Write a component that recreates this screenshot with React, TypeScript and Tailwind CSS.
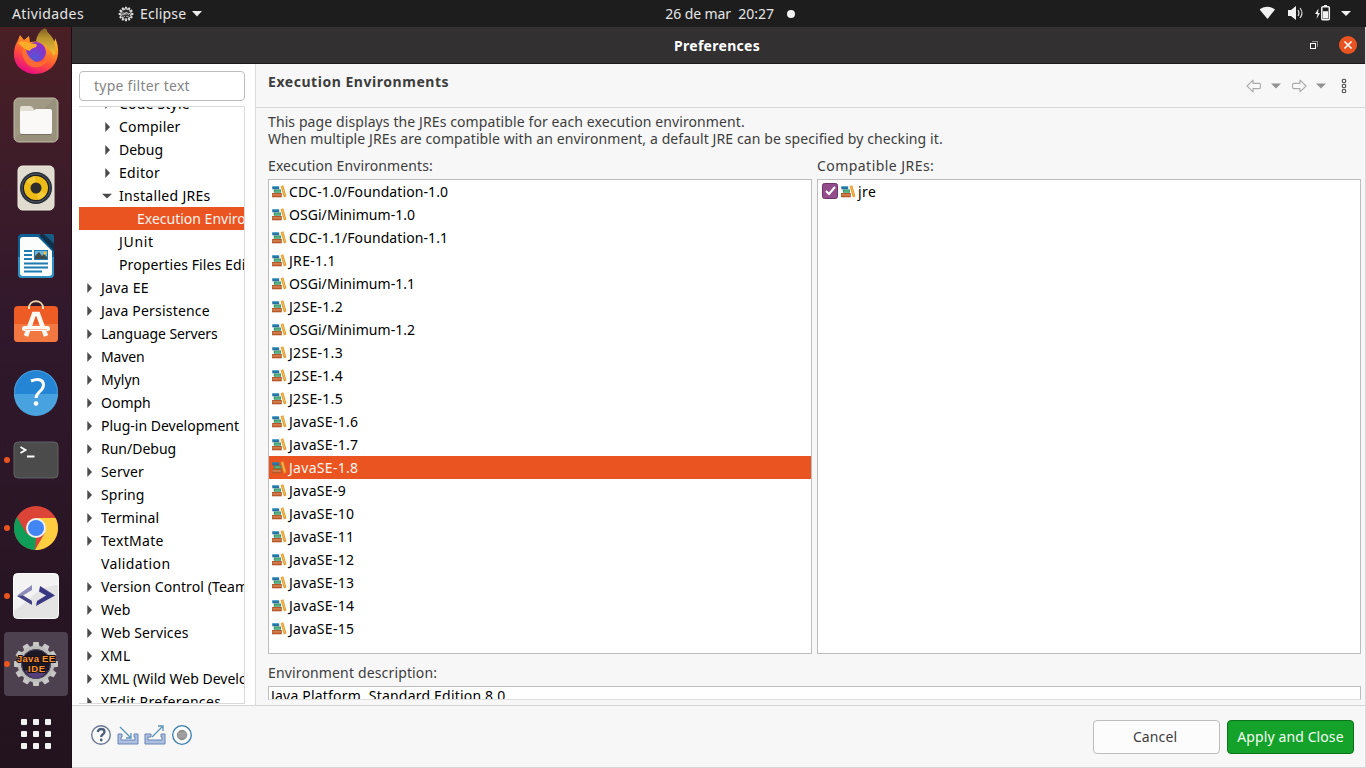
import type { ReactNode } from "react";

type TreeItem = { label: string; level: number; arrow?: "right" | "down"; selected?: boolean; spacing?: string };

const tree: TreeItem[] = [
  { label: "Code Style", level: 1, arrow: "right", spacing: "tracking-[0.2px]" },
  { label: "Compiler", level: 1, arrow: "right", spacing: "tracking-[0.2px]" },
  { label: "Debug", level: 1, arrow: "right" },
  { label: "Editor", level: 1, arrow: "right", spacing: "tracking-[0.3px]" },
  { label: "Installed JREs", level: 1, arrow: "down", spacing: "tracking-[0.3px]" },
  { label: "Execution Environments", level: 2, selected: true },
  { label: "JUnit", level: 1, spacing: "tracking-[0.7px]" },
  { label: "Properties Files Editor", level: 1, spacing: "tracking-[0.1px]" },
  { label: "Java EE", level: 0, arrow: "right", spacing: "tracking-[0.3px]" },
  { label: "Java Persistence", level: 0, arrow: "right", spacing: "tracking-[0.2px]" },
  { label: "Language Servers", level: 0, arrow: "right", spacing: "tracking-[-0.08px]" },
  { label: "Maven", level: 0, arrow: "right", spacing: "tracking-[-0.15px]" },
  { label: "Mylyn", level: 0, arrow: "right" },
  { label: "Oomph", level: 0, arrow: "right" },
  { label: "Plug-in Development", level: 0, arrow: "right" },
  { label: "Run/Debug", level: 0, arrow: "right" },
  { label: "Server", level: 0, arrow: "right", spacing: "tracking-[0.15px]" },
  { label: "Spring", level: 0, arrow: "right", spacing: "tracking-[0.1px]" },
  { label: "Terminal", level: 0, arrow: "right", spacing: "tracking-[0.1px]" },
  { label: "TextMate", level: 0, arrow: "right", spacing: "tracking-[0.3px]" },
  { label: "Validation", level: 0, spacing: "tracking-[0.4px]" },
  { label: "Version Control (Team)", level: 0, arrow: "right", spacing: "tracking-[0.1px]" },
  { label: "Web", level: 0, arrow: "right" },
  { label: "Web Services", level: 0, arrow: "right", spacing: "tracking-[0.1px]" },
  { label: "XML", level: 0, arrow: "right", spacing: "tracking-[0.5px]" },
  { label: "XML (Wild Web Developer)", level: 0, arrow: "right" },
  { label: "YEdit Preferences", level: 0, arrow: "right", spacing: "tracking-[0.33px]" },
];

const environments = [
  "CDC-1.0/Foundation-1.0", "OSGi/Minimum-1.0", "CDC-1.1/Foundation-1.1", "JRE-1.1", "OSGi/Minimum-1.1",
  "J2SE-1.2", "OSGi/Minimum-1.2", "J2SE-1.3", "J2SE-1.4", "J2SE-1.5", "JavaSE-1.6", "JavaSE-1.7", "JavaSE-1.8",
  "JavaSE-9", "JavaSE-10", "JavaSE-11", "JavaSE-12", "JavaSE-13", "JavaSE-14", "JavaSE-15",
];

function environmentSpacing(name: string) {
  if (name.startsWith("J")) return "tracking-[0.3px]";
  return name.startsWith("CDC") ? "tracking-[0.1px]" : "tracking-[0.05px]";
}

const indent = ["pl-[8px]", "pl-[26px]", "pl-[44px]"];

function TreeArrow({ kind }: { kind?: "right" | "down" }) {
  return (
    <svg width="14" height="12" viewBox="0 0 14 12" className="shrink-0 overflow-visible" fill="#4a4a4a">
      {kind === "right" && <path d="M0.3 1v10l4.7-5z" />}
      {kind === "down" && <path d="M-3 3.8h10l-5 4.8z" />}
    </svg>
  );
}

function Books() {
  return (
    <svg width="16" height="14" viewBox="0 0 16 14" className="shrink-0">
      <path d="M1.3 1.5h6.9v2.8H1.3z" fill="#2a6ba6" />
      <path d="M1.3 1.5h6.4v1H1.3z" fill="#1b93b4" />
      <path d="M2.8 4.5h7.2v3.2H2.8z" fill="#2c9062" />
      <path d="M3.8 5.6h5.6v1H3.8z" fill="#7cc79b" />
      <path d="M1 8h9.8v4.3H1z" fill="#b5592b" />
      <path d="M1.5 9.3h8.4v1.3H1.5z" fill="#dc8b59" />
      <path d="M9.6 1.2l2.7-.9 3.1 11-2.5 1.2z" fill="#e59a25" />
      <path d="M10.7 1.5l.9-.3 2.6 9-.9.4z" fill="#f6c066" />
    </svg>
  );
}

function DockItem({ children, running, active, first }: { children: ReactNode; running?: boolean; active?: boolean; first?: boolean }) {
  return (
    <div className={`relative flex w-[72px] shrink-0 justify-center ${first ? "h-[59px] items-end pb-[10px]" : "h-[68px] items-center"}`}>
      {active && <div className="absolute inset-x-1 inset-y-0.5 rounded-[4px] bg-[#4e414f]" />}
      {running && <div className="absolute top-[31px] left-[4px] size-[6px] rounded-full bg-[#e95420]" />}
      <svg width="48" height="48" viewBox="0 0 48 48" className="relative">{children}</svg>
    </div>
  );
}

const teeth = Array.from({ length: 12 }, (_, i) => i * 30);

function Gear({ color }: { color: string }) {
  return (
    <g fill={color}>
      {teeth.map((a) => (
        <path key={a} d="M20.3 8.5l1-6.5h5.4l1 6.5z" transform={`rotate(${a} 24 24)`} />
      ))}
    </g>
  );
}

function Dock() {
  return (
    <div className="flex w-[72px] shrink-0 flex-col overflow-hidden border-r border-[#1c0d19] bg-linear-to-b from-[#491f25] via-[#31182c] via-40% to-[#22131e]">
      <DockItem first>
        <defs>
          <linearGradient id="ff" x1=".85" y1="0" x2=".35" y2="1">
            <stop offset="0" stopColor="#ffdc3a" />
            <stop offset=".4" stopColor="#ff9322" />
            <stop offset=".7" stopColor="#ff4a3d" />
            <stop offset="1" stopColor="#e80c85" />
          </linearGradient>
          <linearGradient id="fftop" x1="0" y1="0" x2="0" y2="1">
            <stop offset="0" stopColor="#7a5d26" />
            <stop offset=".35" stopColor="#b8922e" />
            <stop offset="1" stopColor="#f7c337" />
          </linearGradient>
          <radialGradient id="ffglobe" cx=".45" cy=".75">
            <stop offset="0" stopColor="#5158d8" />
            <stop offset="1" stopColor="#8a33c8" />
          </radialGradient>
        </defs>
        <path d="M3.500 17L6 12l2-5 4 5 5-4 1 6 12-1c-1-6 0-10 4-12 1 5 6 6 8 13 1-1 1-3 1-4 5 10 4 21-2 28-8 9-21 10-29 5C2 38 0 27 3.500 17z" fill="url(#ff)" />
        <path d="M24 13c1-6 4-11 9-13 2 5 7 7 9 13 2 6 2 11 0 15-3-6-8-12-18-15z" fill="url(#fftop)" />
        <circle cx="24" cy="24" r="10" fill="url(#ffglobe)" />
        <path d="M13 17c1 9 5 14 11 17 6 1 10-1 12-5-1 7-8 12-16 10-6-2-10-9-10-17z" fill="#ff7a2c" opacity=".75" />
        <path d="M6 15c2-2 6-2 11 0l7 1c1 0 1 2 0 3-2 1-5 1-6 4-4-1-8-4-12-8z" fill="#ffad28" />
      </DockItem>
      <DockItem>
        <rect x="2" y="2" width="44" height="44" rx="5" fill="#a09984" stroke="#bfb9a6" />
        <path d="M3 42L42 3h2v42H4z" fill="#8e8772" opacity=".45" />
        <path d="M8 12q0-2 2-2h8q2 0 3 2l2 3v6H8z" fill="#e2dfd2" />
        <path d="M8 17q0-2 2-2h11l3-2h14q2 0 2 2v21q0 2-2 2H10q-2 0-2-2z" fill="#fbf9f7" />
        <path d="M9 38.5h30" stroke="#777160" />
      </DockItem>
      <DockItem>
        <rect x="6" y="2" width="36" height="44" rx="4.5" fill="#e0dcd0" stroke="#eeeae0" />
        <circle cx="24" cy="24" r="16" fill="#2b303b" />
        <circle cx="24" cy="24" r="14" fill="#1e2027" stroke="#555b66" strokeWidth="1" />
        <circle cx="24" cy="24" r="12" fill="#edbc16" />
        <path d="M24 24L14 17a12 12 0 0 1 9-5zM24 24l10 6a12 12 0 0 1-8 6z" fill="#f8d64c" opacity=".6" />
        <circle cx="24" cy="24" r="5.5" fill="#2d2d2d" />
      </DockItem>
      <DockItem>
        <path d="M10 2h18l14 14v26q0 4-4 4H10q-4 0-4-4V6q0-4 4-4z" fill="#0d5f94" />
        <path d="M6 25h36v17q0 4-4 4H10q-4 0-4-4z" fill="#2d91c4" />
        <path d="M11 5h15l14 14v22q0 3-3 3H11q-3 0-3-3V8q0-3 3-3z" fill="#fbfcfc" />
        <path d="M31 2h9q2 0 2 2v8z" fill="#185b87" />
        <path d="M27 3l15 16v-7L33 3z" fill="#102f48" />
        <path d="M12 19h8M12 23h8M12 27h8M12 31.500h24M12 35.500h24M12 39.500h18" stroke="#1c7cb2" strokeWidth="2" />
        <path d="M22 18h14v10H22z" fill="#1c7cb2" />
        <path d="M23 19h12v8H23z" fill="#70b4d5" />
        <path d="M23 27v-3l4-4 3 4 2-2 3 3v2z" fill="#414b49" />
        <circle cx="33" cy="21" r="1.500" fill="#f6c22d" />
      </DockItem>
      <DockItem>
        <path d="M17 8c0-9 14-9 14 0" fill="none" stroke="#ead2a8" strokeWidth="2" />
        <rect x="2" y="6" width="44" height="36" rx="4" fill="#ee5c25" />
        <path d="M2 24h44v14q0 4-4 4H6q-4 0-4-4z" fill="#f17841" />
        <path d="M17 9V6M31 9V6" stroke="#f7ddb5" strokeWidth="2" />
        <path d="M14 36l8-22h4l8 22" fill="none" stroke="#fff8f3" strokeWidth="4.6" />
        <rect x="10" y="26" width="28" height="5" rx="2.5" fill="#fff8f3" />
        <path d="M13 29.500h22" stroke="#f3bba5" />
      </DockItem>
      <DockItem>
        <circle cx="24" cy="24" r="22" fill="#2485d4" />
        <path d="M2 26a22 22 0 0 0 44 0z" fill="#48a2df" />
        <circle cx="24" cy="24" r="21.5" fill="none" stroke="#56a5dc" strokeWidth=".8" />
        <path d="M19 13c8-3 12.500-1 12.500 4 0 6-7.500 7-7.500 13" fill="none" stroke="#fff" strokeWidth="3" />
        <circle cx="24" cy="35.5" r="2.3" fill="#fff" />
      </DockItem>
      <DockItem running>
        <rect x="2" y="6" width="44" height="36" rx="4" fill="#4b4b4b" stroke="#636363" />
        <path d="M8.5 11l5 3-5 3M15 20.5h7.5" stroke="#fff" strokeWidth="1.8" fill="none" />
      </DockItem>
      <DockItem running>
        <circle cx="24" cy="24" r="22" fill="#db4437" />
        <path d="M4.9 13L14.5 29.5 24 34l-1 12A22 22 0 0 1 4.9 13z" fill="#0f9d58" />
        <path d="M24 14h19.600A22 22 0 0 1 23 46l9.500-16.500z" fill="#ffcd40" />
        <circle cx="24" cy="24" r="10" fill="#f1f1f1" />
        <circle cx="24" cy="24" r="8" fill="#4285f4" />
      </DockItem>
      <DockItem running>
        <rect x="1.5" y="1.5" width="45" height="45" rx="4" fill="#f3f3f3" stroke="#fff" />
        <path d="M2 38C17 32 21 15 46 13v29q0 4-4 4H6q-4 0-4-4z" fill="#e4e4e4" />
        <path d="M20 13v5l-9 5.500 8 5-1 1L5 23.500z" fill="#8d8cbb" />
        <path d="M11 23.500l9 5.500v4L5 24z" fill="#454385" />
        <path d="M28 14l15 9.500L24 34l1-5 9-5.500-7-4z" fill="#393782" />
      </DockItem>
      <DockItem running active>
        <Gear color="#c8c8c6" />
        <circle cx="24" cy="24" r="16.500" fill="#211b2c" stroke="#bdbdbb" strokeWidth="3.5" />
        <circle cx="24" cy="24" r="14.5" fill="#1d1826" stroke="#56506a" />
        <path d="M13 31q11-7 22 0-4 7-11 7t-11-7z" fill="#56407c" />
        <g fontFamily="Liberation Sans, sans-serif" fontSize="9.500" fontWeight="bold" textAnchor="middle" fill="#f79332" stroke="#1d1010" strokeWidth="2" paintOrder="stroke">
          <text x="24" y="21.5" textLength="38">Java EE</text>
          <text x="24.500" y="31.500" textLength="17">IDE</text>
        </g>
      </DockItem>
      <div className="flex flex-1 items-start justify-center pt-[21px]">
        <div className="grid grid-cols-3 gap-[6px]">
          {Array.from({ length: 9 }, (_, i) => (
            <div key={i} className="size-[6px] rounded-[1px] bg-[#f2f2f2]" />
          ))}
        </div>
      </div>
    </div>
  );
}

function TopBar() {
  return (
    <div className="grid h-[27px] shrink-0 grid-cols-3 items-center bg-[#1d1d1d] text-[14px] text-[#e6e6e6]">
      <div className="flex items-center pl-[12px]">
        <span className="w-[106px] tracking-[0.4px]">Atividades</span>
        <svg width="16" height="16" viewBox="0 0 48 48">
          <Gear color="#dedede" />
          <circle cx="24" cy="24" r="15" fill="#292929" stroke="#d0d0d0" strokeWidth="4" strokeDasharray="7 3" />
          <path d="M11 21h8v5h-7M22 26v-6h5v6M29 20l3 6 4-6M17 31h4M25 31h7" stroke="#dedede" strokeWidth="2.5" fill="none" />
        </svg>
        <span className="ml-[6px] w-[47px] tracking-[0.2px]">Eclipse</span>
        <svg width="10" height="6" viewBox="0 0 10 6" className="ml-[5px]" fill="#eee"><path d="M0 0h10L5 5.5z" /></svg>
      </div>
      <div className="flex items-center pl-[210px] whitespace-nowrap">
        <span className="w-[73px] tracking-[-0.1px]">26 de mar</span>
        <span className="tracking-[-0.05px]">20:27</span>
        <span className="ml-[13px] size-[8px] rounded-full bg-[#f2f2f2]" />
      </div>
      <svg width="96" height="20" viewBox="0 0 96 20" className="mr-[10px] -mt-px justify-self-end" fill="#f2f2f2">
        <path d="M-.5 6.400Q7.500 1 15 6.400L7.500 16z" />
        <path d="M28 7h3l5-4v14l-5-4h-3z" />
        <path d="M38 7q2 3 0 6M40 5q4 5 0 10" fill="none" stroke="#d8d8d8" strokeWidth="1.2" />
        <path d="M58.500 5.500L55 11h2.500l-1 5 3.500-6h-2z" />
        <path d="M64 2h3v2h-3z" />
        <rect x="61.8" y="3.8" width="7.5" height="13" rx="1" fill="none" stroke="#f2f2f2" strokeWidth="1.5" />
        <path d="M63 8.200h5v7.300h-5z" />
        <path d="M81 8h10l-5 5z" />
      </svg>
    </div>
  );
}

function NavArrow({ flip }: { flip?: boolean }) {
  return (
    <svg width="16" height="14" viewBox="0 0 16 14" className={flip ? "-scale-x-100" : ""}>
      <path d="M1 7l6-5.800v3.200h6.200q1.200 0 1.200 1v3.200q0 1-1.200 1H7v3.200z" fill="#f9f9f9" stroke="#aaa" strokeWidth="1.1" strokeLinejoin="round" />
    </svg>
  );
}

function Sidebar() {
  return (
    <div className="flex w-[184px] shrink-0 flex-col border-r border-[#dcdcdc] bg-white pt-[7px] pl-[7px]">
      <div className="flex h-[30px] w-[166px] shrink-0 items-center rounded-[4px] border border-[#bdbdbd] bg-white pb-[2px] pl-[14px] text-[14px] tracking-[0.25px] text-[#858585]">
        type filter text
      </div>
      <div className="mt-[5px] h-[598px] w-[166px] overflow-hidden border-t border-r border-b border-[#dadada]">
        <div className="-mt-[15px]">
          {tree.map((item) => (
            <div key={item.label} className={`flex h-[23px] items-center whitespace-nowrap ${indent[item.level]} ${item.selected ? "bg-[#e95420] text-[#fff3ee]" : "text-black"}`}>
              <TreeArrow kind={item.arrow} />
              <span className={item.spacing}>{item.label}</span>
            </div>
          ))}
        </div>
      </div>
    </div>
  );
}

function Content() {
  return (
    <div className="flex min-w-0 flex-1 flex-col">
      <div className="flex h-[44px] shrink-0 items-start justify-between border-b border-[#d6d6d6] pt-[8px] pl-[12px]">
        <h1 className="text-[14px] leading-[20px] font-bold tracking-[0.54px] text-[#3d3d3d]">Execution Environments</h1>
        <div className="mt-[6px] mr-[17px] flex items-center">
          <NavArrow />
          <svg width="10" height="6" viewBox="0 0 10 6" className="ml-[9px]" fill="#929292"><path d="M0 .5h10l-5 5z" /></svg>
          <span className="w-[10px]" />
          <NavArrow flip />
          <svg width="10" height="6" viewBox="0 0 10 6" className="ml-[9px]" fill="#929292"><path d="M0 .5h10l-5 5z" /></svg>
          <svg width="8" height="16" viewBox="0 0 8 16" className="ml-[14px]" fill="none" stroke="#454545" strokeWidth="1.1">
            <circle cx="4" cy="3" r="1.8" /><circle cx="4" cy="8" r="1.8" /><circle cx="4" cy="13" r="1.8" />
          </svg>
        </div>
      </div>
      <div className="flex flex-1 flex-col pt-[5px] pr-[4px] pl-[12px] text-[#3d3d3d]">
        <p className="leading-[17px] tracking-[0.1px]">This page displays the JREs compatible for each execution environment.</p>
        <p className="leading-[17px] tracking-[0.1px]">When multiple JREs are compatible with an environment, a default JRE can be specified by checking it.</p>
        <div className="mt-[9px] flex gap-[5px]">
          <div className="w-[544px]">
            <div className="h-[23px] leading-[20px] tracking-[0.1px]">Execution Environments:</div>
            <div className="h-[475px] border border-[#bdbdbd] bg-white">
              {environments.map((name) => (
                <div key={name} className={`flex h-[23px] items-center pl-[2px] ${name === "JavaSE-1.8" ? "bg-[#e95420] text-[#fff3ee]" : "text-black"}`}>
                  <Books />
                  <span className={`ml-[2px] ${environmentSpacing(name)}`}>{name}</span>
                </div>
              ))}
            </div>
          </div>
          <div className="w-[544px]">
            <div className="h-[23px] leading-[20px] tracking-[0.45px]">Compatible JREs:</div>
            <div className="h-[475px] border border-[#bdbdbd] bg-white">
              <div className="flex h-[23px] items-center pl-[4px] text-black">
                <svg width="16" height="16" viewBox="0 0 16 16" className="mr-[2px] -mt-px">
                  <rect x=".5" y=".5" width="15" height="15" rx="2" fill="#924d8b" stroke="#6e3568" />
                  <path d="M4 8l3 3 6-7" fill="none" stroke="#fff" strokeWidth="2" />
                </svg>
                <Books />
                <span className="ml-[2px] tracking-[0.5px]">jre</span>
              </div>
            </div>
          </div>
        </div>
        <div className="mt-[9px] h-[23px] leading-[20px] tracking-[0.15px]">Environment description:</div>
        <div className="h-[14px] overflow-hidden border border-[#bdbdbd] border-b-[#dedede] bg-white pl-[2px] leading-[18px] tracking-[0.2px] text-black">
          Java Platform, Standard Edition 8.0
        </div>
      </div>
    </div>
  );
}

function Footer() {
  return (
    <div className="flex h-[63px] shrink-0 items-center justify-between border-t border-b border-[#d6d6d6] pr-[11px] pl-[18px]">
      <div className="flex items-center gap-[5px] pb-[4px]">
        <svg width="22" height="22" viewBox="0 0 22 22" fill="none">
          <circle cx="11" cy="11" r="9.3" fill="#f9fafc" stroke="#6c7892" strokeWidth="1.4" />
          <path d="M7.700 8q.7-3 3.600-3 3.200 0 3.200 2.800 0 1.500-1.800 2.700Q11.200 11.500 11.200 13" stroke="#4e5d7a" strokeWidth="2.300" />
          <circle cx="11.2" cy="16" r="1.4" fill="#4e5d7a" />
        </svg>
        <svg width="22" height="22" viewBox="0 0 22 22" fill="none">
          <path d="M5 10H1v10h20V10h-4v3h1v3H4v-3h1z" fill="#aebfdf" stroke="#6685b8" />
          <path d="M3 3l11 11M14 9v5H9" stroke="#5994b9" strokeWidth="1.3" />
        </svg>
        <svg width="22" height="22" viewBox="0 0 22 22" fill="none">
          <path d="M7 10H1v10h20V10h-4v3h1v3H4v-3h3z" fill="#aebfdf" stroke="#6685b8" />
          <path d="M8 13L19 2M14 2h5v5" stroke="#5994b9" strokeWidth="1.3" />
        </svg>
        <svg width="22" height="22" viewBox="0 0 22 22">
          <circle cx="11" cy="11" r="9.3" fill="#fafcfe" stroke="#397cac" strokeWidth="1.3" />
          <circle cx="11" cy="11" r="4.7" fill="#969696" stroke="#888" />
          <path d="M7 9.500h8M7 12h8" stroke="#adadad" />
        </svg>
      </div>
      <div className="flex gap-[7px]">
        <button className="h-[34px] w-[127px] rounded-[4px] border border-[#bdbdbd] bg-[#fcfcfc] pr-[3px] tracking-[0.1px] text-[#3d3d3d]">Cancel</button>
        <button className="h-[34px] w-[127px] rounded-[4px] border border-[#0b7419] bg-[#14a22a] whitespace-nowrap tracking-[0.1px] text-[#f4fff5]">Apply and Close</button>
      </div>
    </div>
  );
}

export default function App() {
  return (
    <div className="flex h-[768px] w-[1366px] flex-col overflow-hidden font-['Noto_Sans','Open_Sans',sans-serif] text-[14px]">
      <TopBar />
      <div className="flex min-h-0 flex-1">
        <Dock />
        <div className="flex min-w-0 flex-1 flex-col border-r border-[#dadada] bg-[#f7f7f7]">
          <div className="flex h-[37px] shrink-0 items-center border-b border-[#19181a] bg-[#323031]">
            <div className="w-[90px]" />
            <div className="flex-1 text-center text-[14px] font-bold tracking-[0.28px] text-white"><span className="mr-[37px]">Preferences</span></div>
            <svg width="10" height="10" viewBox="0 0 10 10" className="mr-[20px]" fill="none" shapeRendering="crispEdges">
              <path d="M3 1.500h5.500V7" stroke="#8c8c8c" /><path d="M1 3h6v6H1zM2 4v4h4V4z" fill="#fff" fillRule="evenodd" />
            </svg>
            <svg width="18" height="18" viewBox="0 0 18 18" className="mr-[8px]">
              <circle cx="9" cy="9" r="9" fill="#e95420" />
              <path d="M5.500 5.500l7 7M12.500 5.500l-7 7" stroke="#fff" strokeWidth="1.6" />
            </svg>
          </div>
          <div className="flex min-h-0 flex-1">
            <Sidebar />
            <Content />
          </div>
          <Footer />
        </div>
      </div>
    </div>
  );
}
